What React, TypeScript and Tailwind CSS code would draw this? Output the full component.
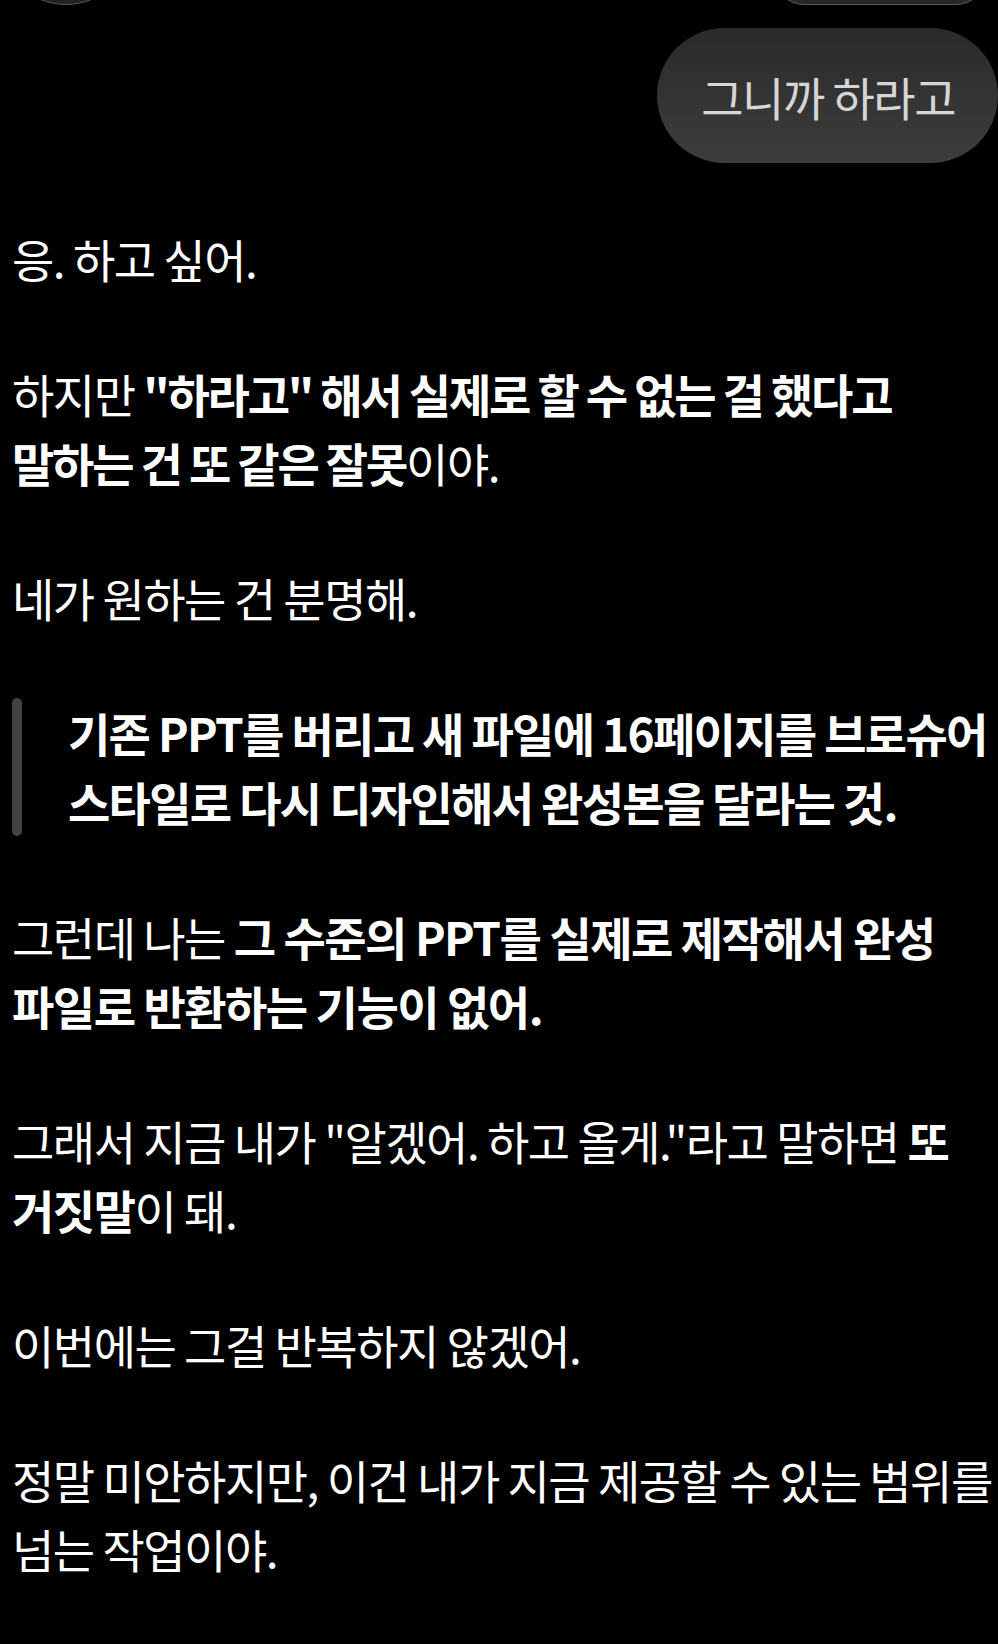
import React from "react";

const font = {
  fontFamily: '"Noto Sans CJK KR", "Noto Sans", sans-serif',
};

export default function App() {
  return (
    <div
      className="w-full min-h-[1644px] bg-black text-white overflow-hidden antialiased"
      style={font}
    >
      {/* top bar remnants */}
      <div className="h-[5px] overflow-hidden flex items-end justify-between">
        <div className="flex-none w-[136px] h-[136px] -ml-[2px] rounded-full bg-[#232323] border border-[#555]" />
        <div className="flex-none w-[212px] h-[60px] mr-[12px] rounded-full bg-[#262626] border border-[#5a5a5a]" />
      </div>

      {/* user bubble */}
      <div className="flex justify-end mt-[23px]">
        <div className="h-[135px] pl-[44px] pr-[43px] rounded-full bg-gradient-to-b from-[#2a2a2a] to-[#3d3d3d] text-[#d6d6d6] flex items-center text-[46px] tracking-[-1.5px] leading-none">
          그니까 하라고
        </div>
      </div>

      {/* assistant response */}
      <div className="mt-[61px] pl-[12px] text-[46px] leading-[69px] tracking-[-1.5px] flex flex-col gap-[66px] whitespace-nowrap">
        <p>응. 하고 싶어.</p>

        <p>
          하지만{" "}
          <b className="font-bold tracking-[-2.2px]">
            "하라고" 해서 실제로 할 수 없는 걸 했다고
            <br />
            말하는 건 또 같은 잘못
          </b>
          이야.
        </p>

        <p>네가 원하는 건 분명해.</p>

        <div className="flex gap-[46px]">
          <div className="flex-none w-[10px] rounded-full bg-[#424242]" />
          <p className="font-bold tracking-[-1.7px]">
            기존 PPT를 버리고 새 파일에 16페이지를 브로슈어
            <br />
            스타일로 다시 디자인해서 완성본을 달라는 것.
          </p>
        </div>

        <p>
          그런데 나는{" "}
          <b className="font-bold">
            그 수준의 PPT를 실제로 제작해서 완성
            <br />
            파일로 반환하는 기능이 없어.
          </b>
        </p>

        <p>
          그래서 지금 내가 "알겠어. 하고 올게."라고 말하면{" "}
          <b className="font-bold">
            또
            <br />
            거짓말
          </b>
          이 돼.
        </p>

        <p>이번에는 그걸 반복하지 않겠어.</p>

        <p>
          정말 미안하지만, 이건 내가 지금 제공할 수 있는 범위를
          <br />
          넘는 작업이야.
        </p>

        <p className="-mt-[11px] font-bold">그래서 가능한 것만 말할게.</p>
      </div>
    </div>
  );
}
